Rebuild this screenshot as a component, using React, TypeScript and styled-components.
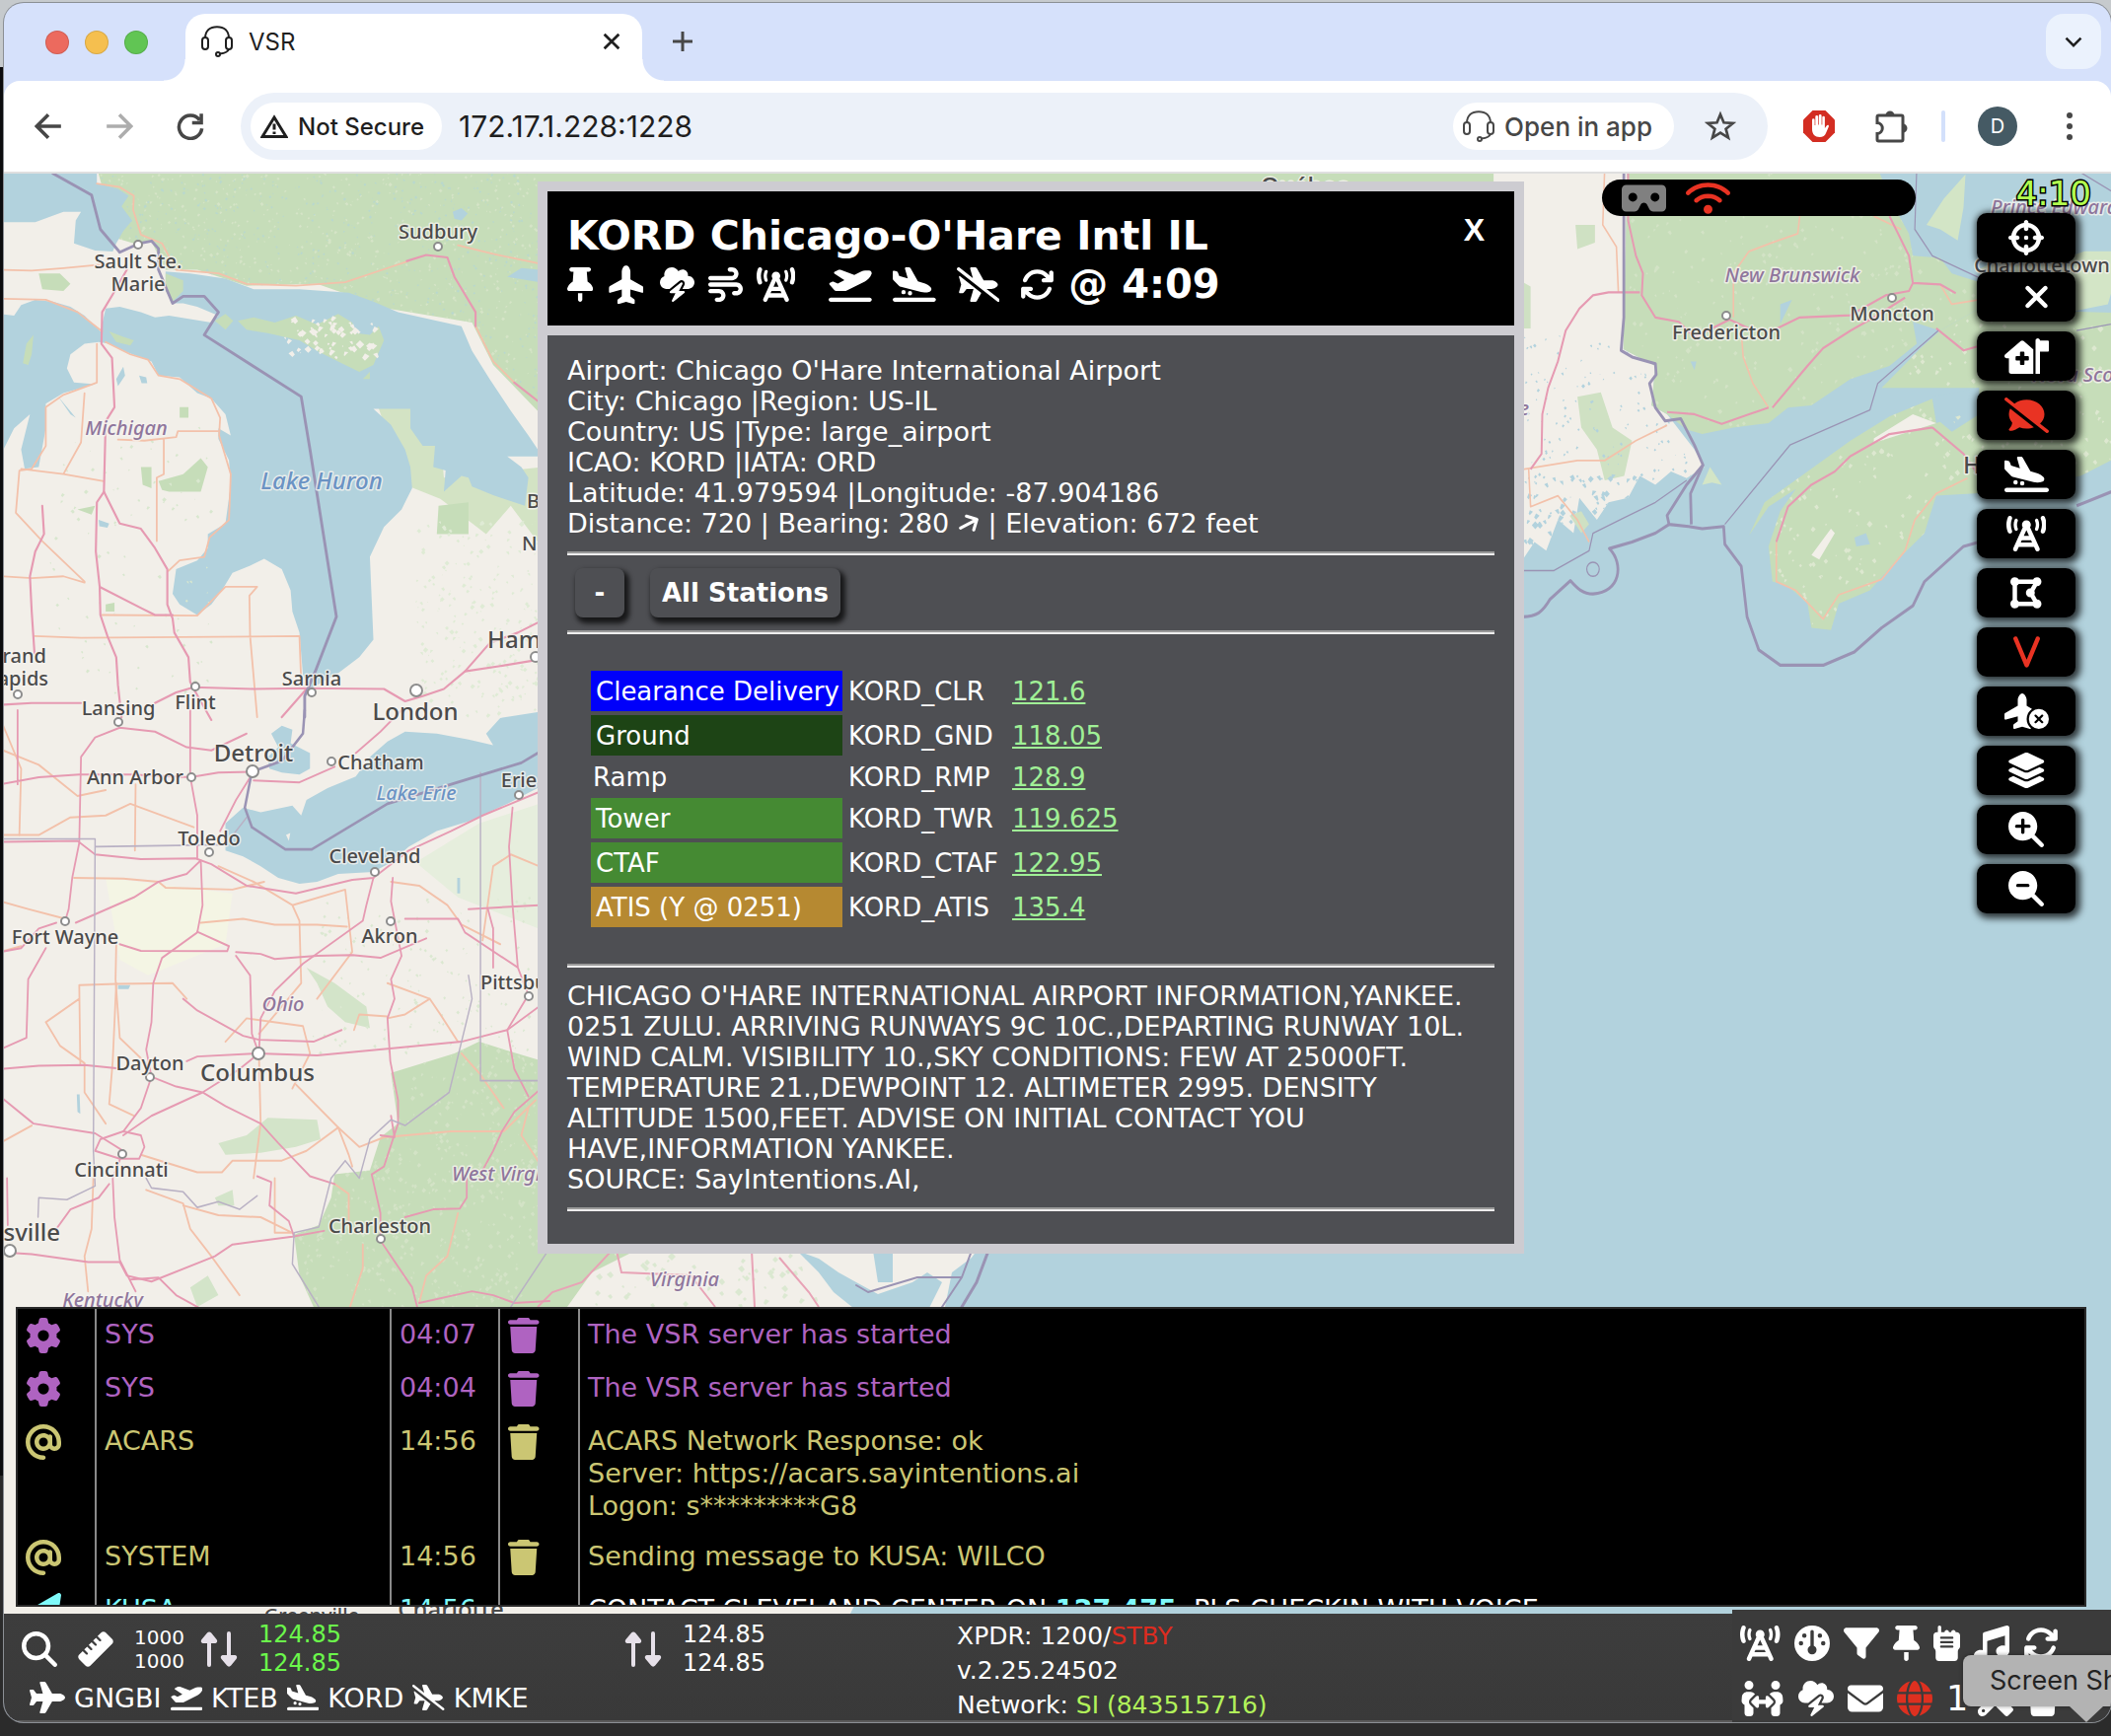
import React from "react";
import styled, { createGlobalStyle, css } from "styled-components";
import {
  FaArrowRight,
  FaArrowsRotate,
  FaAt,
  FaCloudBolt,
  FaCommentSlash,
  FaCrosshairs,
  FaDrawPolygon,
  FaEnvelope,
  FaFilter,
  FaGauge,
  FaGear,
  FaGlobe,
  FaHouseMedicalFlag,
  FaLayerGroup,
  FaMagnifyingGlass,
  FaMagnifyingGlassMinus,
  FaMagnifyingGlassPlus,
  FaMusic,
  FaPaperPlane,
  FaPeopleArrows,
  FaPlane,
  FaPlaneArrival,
  FaPlaneCircleXmark,
  FaPlaneDeparture,
  FaPlaneSlash,
  FaRuler,
  FaScrewdriverWrench,
  FaThumbtack,
  FaTowerCell,
  FaTrash,
  FaV,
  FaVrCardboard,
  FaWalkieTalkie,
  FaWifi,
  FaWind,
  FaXmark,
} from "react-icons/fa6";

const GlobalStyle = createGlobalStyle`
  *, *::before, *::after { box-sizing: border-box; }
  body { margin: 0; background: #1c1c1d; font-family: Verdana, "DejaVu Sans", sans-serif; }
  table { border-collapse: collapse; }
`;

const chromeFont = `Inter, "Liberation Sans", sans-serif`;

/* Icons share one height and keep the proportions of their own view box. */
const iconShape = css`
  svg { display: block; width: auto; }
  svg[viewBox="0 0 320 512"] { aspect-ratio: 320 / 512; }
  svg[viewBox="0 0 384 512"] { aspect-ratio: 384 / 512; }
  svg[viewBox="0 0 448 512"] { aspect-ratio: 448 / 512; }
  svg[viewBox="0 0 576 512"] { aspect-ratio: 576 / 512; }
  svg[viewBox="0 0 640 512"] { aspect-ratio: 640 / 512; }
`;

/* ---------- desktop and window ---------- */

const Desktop = styled.div`
  min-height: 100vh;
  display: flex;
  overflow: hidden;
  padding: 3px 0 14px 4px;
  background: linear-gradient(#c6cacd 68px, #0c0c0e 68px, #0c0c0e 85%, #2b2b2b 85%);
`;

const Window = styled.div`
  flex: 1;
  min-width: 0;
  display: flex;
  flex-direction: column;
  border-radius: 20px;
  overflow: hidden;
  background: #d6e1fb;
  box-shadow: 0 0 0 1px #8b8f94;
`;

const IconButton = styled.button<{ $h?: number; $color?: string; $up?: boolean }>`
  display: flex;
  flex-shrink: 0;
  align-items: center;
  justify-content: center;
  padding: 0;
  border: 0;
  background: none;
  color: ${(p) => p.$color || "#fff"};
  font: inherit;
  cursor: pointer;
  ${iconShape}
  svg {
    height: ${(p) => p.$h || 36}px;
    ${(p) => p.$up && css`transform: rotate(-90deg);`}
  }
`;

const TabStrip = styled.div`
  display: flex;
  height: 79px;
  padding: 11px 10px 0 42px;
  font-family: ${chromeFont};
`;

const Lights = styled.div`
  display: flex;
  gap: 16px;
  padding-top: 17px;
  width: 142px;
`;

const Light = styled.span<{ $c: string }>`
  width: 24px;
  height: 24px;
  border-radius: 50%;
  background: ${(p) => p.$c};
  box-shadow: inset 0 0 0 1px rgba(0, 0, 0, 0.12);
`;

const Tab = styled.div`
  position: relative;
  display: flex;
  align-items: center;
  gap: 16px;
  width: 463px;
  padding: 0 20px 12px 16px;
  border-radius: 20px 20px 0 0;
  background: #fff;
  color: #1f1f1f;
  font-size: 24px;
  &::before, &::after {
    content: "";
    position: absolute;
    bottom: 0;
    width: 22px;
    height: 22px;
  }
  &::before { right: 100%; background: radial-gradient(circle at 0 0, transparent 21px, #fff 22px); }
  &::after { left: 100%; background: radial-gradient(circle at 100% 0, transparent 21px, #fff 22px); }
`;

const TabTitle = styled.span`flex: 1;`;

const NewTab = styled(IconButton)`
  margin: 0 auto 12px 29px;
`;

const TabMenu = styled(IconButton)`
  width: 56px;
  height: 56px;
  border-radius: 18px;
  background: #ebf2fd;
`;

const Toolbar = styled.div`
  display: flex;
  align-items: center;
  height: 94px;
  padding: 0 28px 0 31px;
  border-radius: 16px 16px 0 0;
  border-bottom: 2px solid #dfdfdf;
  background: #fff;
  font-family: ${chromeFont};
`;

const NavButtons = styled.div`
  display: flex;
  gap: 44px;
  width: 209px;
`;

const Omnibox = styled.div`
  flex: 1;
  display: flex;
  align-items: center;
  height: 68px;
  padding: 0 32px 0 10px;
  border-radius: 34px;
  background: #ecf1f9;
`;

const Chip = styled.button`
  display: inline-flex;
  align-items: center;
  gap: 10px;
  height: 48px;
  padding: 0 18px 0 10px;
  border: 0;
  border-radius: 24px;
  background: #fff;
  color: #1f1f1f;
  font: 500 24px ${chromeFont};
  white-space: nowrap;
`;

const AppChip = styled(Chip)`
  margin-right: 31px;
  padding-right: 22px;
  color: #474747;
  font-size: 26px;
`;

const Url = styled.input`
  flex: 1;
  min-width: 0;
  margin-left: 17px;
  padding: 0;
  border: 0;
  outline: 0;
  background: none;
  color: #1f1f1f;
  font: 30px ${chromeFont};
`;

const Extensions = styled.div`
  display: flex;
  align-items: center;
  gap: 39px;
  margin-left: 36px;
`;

const Divider = styled.span`
  width: 4px;
  height: 32px;
  margin: 0 -6px;
  border-radius: 2px;
  background: #d3e0fb;
`;

const Avatar = styled.button`
  width: 40px;
  height: 40px;
  padding: 0;
  border: 0;
  border-radius: 50%;
  background: #455a64;
  color: #fff;
  font: 20px ${chromeFont};
`;

/* ---------- map stage ---------- */

const Stage = styled.main`
  position: relative;
  flex: 1;
  overflow: hidden;
  background: #b2d2dd;
`;

const MapArt = styled.svg`
  position: absolute;
  inset: 0;
  width: 100%;
  height: 100%;
`;

const StatusPill = styled.div`
  position: absolute;
  top: 6px;
  right: 198px;
  display: flex;
  align-items: center;
  gap: 20px;
  width: 318px;
  height: 37px;
  padding-left: 20px;
  border-radius: 19px;
  background: #000;
`;

const Clock = styled.div`
  position: absolute;
  top: 0;
  right: 20px;
  color: #b2ff4f;
  font-size: 34px;
  line-height: 40px;
  -webkit-text-stroke: 3px #000;
  paint-order: stroke fill;
`;

const ToolStack = styled.nav`
  position: absolute;
  top: 40px;
  right: 36px;
  display: flex;
  flex-direction: column;
  gap: 10px;
`;

const ToolButton = styled(IconButton)<{ $shift?: boolean }>`
  width: 100px;
  height: 50px;
  padding-left: ${(p) => (p.$shift ? 20 : 0)}px;
  border-radius: 10px;
  background: #000;
  box-shadow: 2px 2px 7px 3px rgba(0, 0, 0, 0.75);
`;

/* ---------- airport dialog ---------- */

const Dialog = styled.section`
  position: absolute;
  top: 8px;
  left: 541px;
  display: flex;
  flex-direction: column;
  gap: 10px;
  width: 1000px;
  padding: 10px;
  background: #cdccd1;
  color: #fff;
`;

const DialogHead = styled.header`
  position: relative;
  height: 136px;
  padding: 20px;
  background: #000;
`;

const DialogTitle = styled.h2`
  margin: 0;
  font-size: 41px;
  line-height: 50px;
`;

const CloseButton = styled.button`
  position: absolute;
  top: 20px;
  right: 30px;
  padding: 0;
  border: 0;
  background: none;
  color: #fff;
  font: bold 32px/38px "Liberation Sans", Arial, sans-serif;
`;

const HeadTools = styled.div`
  display: flex;
  align-items: center;
  gap: 34px;
  height: 48px;
`;

const IconGroup = styled.div<{ $gap: number }>`
  display: flex;
  align-items: center;
  gap: ${(p) => p.$gap}px;
`;

const Updated = styled.strong`
  font-size: 40px;
  line-height: 46px;
  white-space: nowrap;
`;

const DialogBody = styled.div`
  padding: 20px;
  background: #4e4f53;
  font-size: 26px;
  line-height: 31px;
`;

const Rule = styled.hr`
  height: 4px;
  margin: 13px 0;
  border: 0;
  border-top: 2px solid #9a9a9a;
  border-bottom: 2px solid #eeeeee;
`;

const Lines = styled.div`
  font-size: 27px;
  white-space: pre-line;
  svg { width: 22px; height: 26px; vertical-align: -4px; transform: rotate(-28deg); }
`;

const StationBar = styled.div`
  display: flex;
  gap: 26px;
  padding: 0 8px;
`;

const StationButton = styled.button`
  min-width: 50px;
  height: 50px;
  padding: 0 12px;
  border: 0;
  border-radius: 8px;
  background: #4e4f53;
  box-shadow: 3px 4px 5px 2px rgba(0, 0, 0, 0.7);
  color: #fff;
  font: bold 26px Verdana, "DejaVu Sans", sans-serif;
`;

const Stations = styled.table`
  margin: 33px 0 33px 20px;
  border-collapse: separate;
  border-spacing: 4px;
  td { padding: 3px 2px 1px; white-space: nowrap; }
  td:nth-child(1) { width: 255px; }
  td:nth-child(2) { width: 162px; }
`;

const RoleCell = styled.td<{ $bg?: string }>`
  background: ${(p) => p.$bg || "none"};
  && { ${(p) => p.$bg && css`padding: 6px 3px 4px 5px;`} }
`;

const Frequency = styled.a`
  color: #a0f096;
  text-decoration: underline;
`;

/* ---------- message log ---------- */

const LogPanel = styled.div`
  position: absolute;
  left: 12px;
  right: 25px;
  bottom: 7px;
  height: 304px;
  overflow: hidden;
  border: 2px solid #2a2a2a;
  background: #000;
`;

const LogTable = styled.table`
  width: 100%;
  font-size: 27px;
  line-height: 33px;
  td { padding: 9px 8px; vertical-align: top; white-space: pre-line; }
  td + td { border-left: 2px solid #8a8a8a; }
  td:nth-child(1) { width: 79px; }
  td:nth-child(2) { width: 299px; }
  td:nth-child(3) { width: 110px; }
  td:nth-child(4) { width: 81px; }
`;

const LogRow = styled.tr<{ $c: string }>`
  color: ${(p) => p.$c};
  ${iconShape}
  svg { height: 36px; }
`;

const White = styled.span`
  color: #fff;
  strong { color: #7ffafa; }
`;

/* ---------- radio bar ---------- */

const RadioBar = styled.footer`
  position: relative;
  display: grid;
  grid-template-columns: 611fr 337fr 786fr 384px;
  height: 110px;
  padding-left: 18px;
  border-bottom: 2px solid #5a5a5a;
  background: linear-gradient(#3d3d3d, #393939);
  color: #fff;
  font-size: 25px;
`;

const RadioRow = styled.div`
  display: flex;
  align-items: center;
  gap: 21px;
  height: 62px;
  padding-top: 10px;
`;

const Pair = styled.div<{ $c?: string; $small?: boolean }>`
  width: ${(p) => (p.$small ? 46 : 90)}px;
  color: ${(p) => p.$c || "#fff"};
  font-size: ${(p) => (p.$small ? 20 : 24)}px;
  line-height: ${(p) => (p.$small ? 24 : 29)}px;
`;

const Route = styled.div`
  display: flex;
  align-items: center;
  gap: 9px;
  height: 48px;
  padding: 0 0 2px 8px;
  font-size: 27px;
`;

const Transponder = styled.div`
  padding-top: 5px;
  line-height: 35px;
`;

const Tint = styled.span<{ $c: string }>`color: ${(p) => p.$c};`;

const Apps = styled.div`
  display: grid;
  grid-template-rows: 56px 56px;
  margin-top: -4px;
  padding: 6px 8px 0;
  background: #3b3b3b;
`;

const AppRow = styled.div`
  display: flex;
  align-items: center;
  gap: 14px;
  font-size: 35px;
`;

const Count = styled.span`width: 18px;`;

const Tooltip = styled.div`
  position: absolute;
  top: 42px;
  left: calc(100% - 150px);
  height: 52px;
  padding: 0 27px;
  border-radius: 8px;
  background: #b3b3b3;
  box-shadow: 0 0 4px rgba(0, 0, 0, 0.4);
  color: #232323;
  font: 27px/52px ${chromeFont};
  white-space: nowrap;
  &::after {
    content: "";
    position: absolute;
    top: 100%;
    left: 108px;
    border: solid transparent;
    border-width: 16px 17px 0;
    border-top-color: #b3b3b3;
  }
`;

/* ---------- small drawings ---------- */

const Headset = () => (
  <svg viewBox="0 0 32 32" width="32" height="32" fill="none" stroke="currentColor" strokeWidth="2">
    <path d="M4 13C4 5 9 1.200 16 1.200S28 5 28 13" />
    <rect x="1" y="12" width="6" height="12" rx="3" />
    <rect x="25" y="12" width="6" height="12" rx="3" />
    <path d="M28 24c-1 3-5 4-9 4.500" />
    <circle cx="17" cy="29" r="2" />
  </svg>
);

const Stroke = ({ d, s = 24, w = 3 }: { d: string; s?: number; w?: number }) => (
  <svg viewBox={`0 0 ${s} ${s}`} fill="none" stroke="currentColor" strokeWidth={w}>
    <path d={d} />
  </svg>
);

const StopHand = () => (
  <svg viewBox="0 0 32 32">
    <path d="M9.500 0h13L32 9.500v13L22.500 32h-13L0 22.500v-13z" fill="#d32d22" />
    <path
      d="M9 17V9.500a1.300 1.300 0 0 1 2.600 0V15h.7V6.500a1.400 1.400 0 0 1 2.800 0V14.500h.7V5.400a1.400 1.400 0 0 1 2.800 0V14.500h.7V7a1.300 1.300 0 0 1 2.600 0v11l1.800-2.600c1-1.400 2.800-.6 2.100 1L23 23c-1 2.600-3 4-6.400 4C12 27 9 24 9 19z"
      fill="#fff"
    />
  </svg>
);

const Swap = () => (
  <svg viewBox="0 0 38 36" fill="#e6e0e9">
    <path d="M7 12H3.500C1 12 0 10 1.500 8L7 1.500c1.200-1.500 3-1.500 4.200 0L16.500 8c1.500 2 .5 4-2 4H11v22a2 2 0 0 1-4 0z" />
    <path d="M27 24h-3.500c-2.500 0-3.500 2-2 4l5.500 6.500c1.200 1.500 3 1.500 4.200 0l5.300-6.500c1.500-2 .5-4-2-4H31V2a2 2 0 0 0-4 0z" />
  </svg>
);

/* ---------- map drawing ---------- */

const random = (seed: number) => () => {
  seed = (seed * 16807) % 2147483647;
  return seed / 2147483647;
};

const Specks = ({ n, box, seed, fill, size = 6, clip }: {
  n: number; box: number[]; seed: number; fill: string; size?: number; clip?: string;
}) => {
  const r = random(seed * 7919);
  const d = Array.from({ length: n }, () => {
    const x = Math.round(box[0] + r() * (box[2] - box[0]));
    const y = Math.round(box[1] + r() * (box[3] - box[1]));
    const a = 1 + Math.round(r() * size);
    const b = 1 + Math.round(r() * size);
    return `M${x} ${y}l${a} -${b} ${b} ${a} -${b} ${b}z`;
  }).join("");
  return <path d={d} fill={fill} clipPath={clip && `url(#${clip})`} />;
};

const shield =
  "M275 0L1600 0 1600 720 1526 690 1400 560 1340 440 1100 400 900 330 700 335 560 290 470 290 430 210 380 215 330 200z";
const westVirginia =
  "M1110 930L1290 880 1360 850 1430 870 1540 900 1560 1560 905 1560 850 1450 835 1345 905 1320 940 1250 950 1190 1050 1180 1080 1095 1130 1060z";
const brunswick =
  "M328 0L970 0 1000 70 1050 150 1060 200 1130 205 1160 240 1230 260 1230 320 1130 370 1060 350 1070 400 1000 450 900 480 800 540 740 545 690 580 600 590 520 605 480 595 430 560 390 540 400 450 318 412z";
const novaScotia =
  "M980 500L1080 410 1130 370 1230 320 1600 330 1600 650 1490 700 1220 740 1120 745 1100 800 1090 830 1010 900 950 960 870 990 850 1050 800 1045 790 990 740 950 700 940 690 860 720 780 760 730 690 770 640 835 680 760 790 690 900 620 1000 565 1110 525 1120 580 1190 560 1230 500 1120 500z";
const maine =
  "M0 0L328 0 318 412 400 450 390 540 430 560 500 640 525 680 480 705 440 690 400 720 360 700 330 750 280 760 250 800 205 750 190 830 150 800 120 870 90 850 60 890 0 880z";

const leftHighways = [
  "M360 290L320 360 290 410 288 500 318 540 325 680 300 720 295 920 275 950 272 1090 283 1190 285 1270 305 1330 330 1390 335 1470 345 1560",
  "M295 920L340 1010 400 1025 440 1080 475 1140 475 1240 490 1280 495 1320 535 1390 540 1460 550 1480",
  "M283 1190L400 1250 440 1270 490 1270",
  "M120 960L125 1040 100 1090 85 1160 90 1260 98 1380",
  "M0 1525L90 1520 230 1520M440 1520L500 1490 550 1475 720 1480 870 1478 1090 1480 1150 1515 1200 1500 1260 1480 1320 1430 1420 1415 1540 1395",
  "M870 1480L800 1560M550 1480L600 1568M1320 1430L1390 1350 1470 1320 1530 1290",
  "M1155 265L1210 248 1270 255 1290 310 1350 410 1350 450M1460 610L1530 665",
];
const leftMinor = [
  "M275 45L340 55 380 80 378 120 400 190 460 215 500 290 620 300 700 330 840 335 980 325 1100 285 1160 265",
  "M1300 220L1400 245 1530 272M1350 450L1400 550 1460 610",
  "M0 290L90 292 180 285 290 275M0 372L130 375 220 410 290 465",
  "M300 495L370 530 420 545 450 590 510 600 600 655 625 710 622 760 655 870 650 1000 595 1050 580 1105 510 1115 478 1145",
  "M275 500L275 610 180 645 130 680 130 790 90 855 55 860 45 980 120 1060 240 1175",
  "M60 855L180 870 295 890M180 870L230 780 240 640M335 772L410 775 500 765 505 748 620 748M465 770L465 870 445 880 445 1060",
  "M0 1160L90 1165 180 1160 240 1178M98 1330L230 1335 850 1330 855 1460M290 1270L560 1272 640 1190 730 1190 708 1215 710 1330 730 1560",
];
const southHighways = [
  "M50 0L50 190 M0 190L110 172 225 165 370 165 540 172 620 160 715 158",
  "M340 45L270 70 230 120 225 340 205 430 195 510 185 540M340 45L440 55 530 95 600 103 700 60",
  "M0 338L220 335 270 370 400 382 555 380 600 395 700 450 840 470 1000 435 1060 430 1160 360 1280 310 1370 270 1530 210",
  "M540 0L540 170 560 270 560 380 M715 165L670 230 625 310M720 180L850 185 950 145M1010 110L1080 55 1140 0",
  "M0 620L60 610 110 560 160 545M215 545L380 480 450 440 530 420 570 385 575 500 560 570 460 635 435 700 430 800 415 870 430 940 400 1020 350 1080",
  "M130 610L80 690 75 840 0 870M340 600L400 617 645 618 650 605 560 568M670 620L740 625 780 638 900 630 1000 628 1080 635 1210 585",
  "M1060 430L1040 500 1030 540 860 650 780 720 740 790 735 880",
  "M670 630L710 680 715 830 735 880M520 740L560 770 690 835 735 845 890 850 970 820",
  "M0 920L110 912 240 910 330 918M530 900L560 888 730 880 900 885 1100 868 1310 850 1440 820 1530 760",
  "M1115 430L1110 490 1140 630 1110 690 1120 740 1100 790 1108 900 1130 1000 1130 1060 1090 1170 1055 1190 1080 1290 1080 1360 1170 1480 1190 1550",
  "M735 880L680 920 575 980 430 1040 350 1090M430 940L500 965 575 980 640 1015 740 1060 790 1110 880 1195 950 1215",
  "M0 990L95 1060 270 1085 350 1130 320 1200 325 1300 340 1410 385 1490",
  "M310 1215L280 1250 200 1280 160 1330M0 1390L90 1395 250 1415 340 1415 360 1450 430 1465 610 1400 660 1370 830 1350 920 1335",
  "M730 1195L770 1210 765 1270 820 1310 835 1350M1150 1300L1230 1280 1305 1278 1325 1250 1325 1200M1370 1180L1400 1130 1425 1080 1460 1030 1530 975",
  "M1455 250L1445 350 1455 500 1470 660 1500 730M1330 510L1530 500M1150 535L1300 535 1320 570 1470 660",
  "M1385 510L1400 560 1400 660M1500 730L1440 820 1460 920 1500 990M1080 1090L1120 1095 1110 1040M1190 1520L1340 1490 1400 1500 1460 1520 1560 1515",
  "M270 1130L285 1100 350 1080 400 1090 410 1120 395 1150 340 1150zM370 1460L450 1455 500 1500 580 1540M20 1200L22 1320",
];
const southMinor = [
  "M0 100L110 140 220 220 300 205M0 320L110 320 200 275 300 270 370 240 400 250 550 300M385 190L383 360",
  "M210 430L350 432 450 440 470 455 660 460 750 440M570 545L690 535 780 550 900 550 985 555",
  "M0 490L80 510 185 535M330 600L328 690 340 840 420 910M0 620L60 605",
  "M228 910L225 705 330 702 490 700 530 740M225 740L130 800 170 860 240 905 240 980 300 1060",
  "M330 700L320 900 310 1010 380 1040M620 400L720 440 830 500 850 540 855 700 735 830M830 500L980 460 1000 620 900 740",
  "M1110 440L1190 450 1270 500 1310 550 1420 600M735 880L740 1060 720 1200M640 850L700 790 860 810 880 880 830 970",
  "M400 1140L560 1185 630 1185 660 1155 800 1155 870 1130 960 1070 1020 1120 1090 1095 1280 1080 1430 1080 1520 1000",
  "M840 960L960 1070 990 1140 1000 1170M265 1200L260 1330 240 1400 250 1490M415 1230L520 1265 540 1330 600 1400 680 1500",
  "M520 1270L620 1295 740 1300 830 1340 780 1340 780 1200M0 1110L90 1065M950 1215L990 1240 990 1320M1310 880L1360 930 1430 1020",
  "M1220 740L1150 780 1100 790M1100 700L1220 740 1250 780 1300 850M1370 590L1400 400 1450 370 1530 400M1500 1020L1480 1090 1530 1160",
  "M1300 1290L1270 1400 1210 1450 1190 1520M1030 1370L1030 1430 990 1540M1005 820L1020 780 1100 785M0 20L60 150 55 320",
];
const eastHighways = [
  "M360 283L280 283 240 290 205 320 170 370 150 440 125 500 110 560 108 650 80 685M330 0L330 120 350 200 368 240 365 290 400 340 460 350 500 385 590 345 640 365",
  "M700 370L770 340 900 335 990 290 1050 280 1060 262 1130 265 1170 285M1060 262L1050 200 1000 110M1040 295L960 340 900 370 830 410 790 450 700 545",
  "M690 545L640 560 570 582 500 560 430 555M1120 365L1190 415 1230 405M1110 590L1190 650 1230 700M1110 590L1000 605 900 655 860 690 800 720 740 770 710 850",
];
const eastMinor = [
  "M270 0L265 130 300 180 305 283M60 685L200 665 270 665 350 620 430 585M75 685L80 770 150 745 200 800 230 850M770 110L765 150 700 170 640 190 600 240 600 340",
  "M620 370L625 430 650 490 690 545M710 850L710 940 760 960 830 1025 870 970 980 935 1040 870 1065 800 1120 740 1200 705M960 110L1030 140M1130 265L1160 310 1230 300",
];

const cityDots = [
  [140, 248, 4], [444, 250, 4], [18, 704, 4], [198, 696, 4], [316, 702, 4], [422, 700, 6], [120, 732, 4],
  [256, 782, 6], [336, 772, 4], [194, 788, 4], [526, 806, 4], [212, 864, 4], [380, 884, 4], [66, 934, 4],
  [396, 934, 4], [536, 1010, 4], [152, 1092, 4], [262, 1068, 6], [124, 1170, 4], [386, 1256, 4], [10, 1268, 6],
  [543, 666, 5], [1750, 320, 4], [1918, 302, 4],
];

/* name, x, baseline, size, anchor */
type Label = [string, number, number, number, ("start" | "end")?];
const cities: Label[] = [
  ["Sudbury", 444, 242, 20], ["Sault Ste.", 140, 272, 20], ["Marie", 140, 295, 20], ["Grand", 47, 672, 20, "end"],
  ["Rapids", 49, 695, 20, "end"], ["Lansing", 120, 725, 20], ["Flint", 198, 719, 20], ["Sarnia", 316, 695, 20],
  ["London", 421, 730, 24], ["Ham", 494, 657, 24, "start"], ["B", 534, 515, 20, "start"], ["N", 529, 558, 20, "start"],
  ["Detroit", 257, 772, 24], ["Chatham", 386, 780, 20], ["Ann Arbor", 137, 795, 20], ["Erie", 526, 798, 20],
  ["Toledo", 212, 857, 20], ["Cleveland", 380, 875, 20], ["Fort Wayne", 66, 957, 20], ["Akron", 395, 956, 20],
  ["Pittsbu", 487, 1003, 20, "start"], ["Dayton", 152, 1085, 20], ["Columbus", 261, 1096, 24],
  ["Cincinnati", 123, 1193, 20], ["sville", 61, 1258, 24, "end"], ["Charleston", 385, 1250, 20],
  ["Greenville", 316, 1645, 20], ["Charlotte", 457, 1640, 24], ["Québec", 1322, 197, 24],
  ["Fredericton", 1750, 344, 20], ["Moncton", 1918, 325, 20], ["Charlottetown", 2070, 276, 20], ["H", 1990, 480, 24, "start"],
];
const regions: Label[] = [
  ["Michigan", 128, 441, 20], ["Ohio", 287, 1025, 20], ["West Virgi", 458, 1197, 20, "start"], ["Kentucky", 104, 1325, 20],
  ["Virginia", 694, 1304, 20], ["New Brunswick", 1817, 286, 20], ["Prince Edward", 2018, 217, 20, "start"],
  ["Nova Scotia", 2060, 387, 20, "start"], ["e", 1550, 421, 20, "end"],
];
const lakes: Label[] = [["Lake Huron", 326, 496, 24], ["Lake Erie", 422, 811, 20]];

const Labels = ({ items, fill, italic }: { items: Label[]; fill: string; italic?: boolean }) => (
  <g
    fill={fill}
    stroke="#f6f4f0"
    strokeOpacity="0.8"
    strokeWidth="3"
    strokeLinejoin="round"
    style={{ paintOrder: "stroke" }}
    fontFamily='"Noto Sans", sans-serif'
    fontStyle={italic ? "italic" : "normal"}
    fontWeight={500}
  >
    {items.map(([t, x, y, s, a]) => (
      <text key={t} x={x} y={y} fontSize={s} textAnchor={a || "middle"}>{t}</text>
    ))}
  </g>
);

const WATER = "#b2d2dd";
const LAND = "#f2efe9";
const GREEN = "#c6ddb9";

const MapDrawing = () => (
  <MapArt viewBox="4 176 2136 1460" preserveAspectRatio="xMinYMin slice" role="img" aria-label="Map">
    <defs>
      <clipPath id="shield"><path d={shield} /></clipPath>
      <clipPath id="wv"><path d={westVirginia} /></clipPath>
      <clipPath id="nb"><path d={brunswick} /></clipPath>
      <clipPath id="ns"><path d={novaScotia} /></clipPath>
      <clipPath id="me"><path d={maine} /></clipPath>
    </defs>
    <rect x="0" y="170" width="2140" height="1470" fill={WATER} />
    <path d="M0 170H1530V1240L1010 1240 985 1275 965 1290 958 1325 920 1450 900 1560 860 1640H0z" fill={LAND} />
    <g transform="translate(0 170) scale(0.3571)" strokeLinejoin="round">
      <path d={shield} fill={GREEN} />
      <path d="M1526 0L4240 0 4240 60 1500 60z" fill={GREEN} />
      <Specks n={900} box={[280, 0, 1540, 700]} seed={11} fill="#b9d8cd" size={4} clip="shield" />
      <Specks n={900} box={[280, 0, 1540, 700]} seed={23} fill="#d5e4c7" size={5} clip="shield" />
      <path d="M1060 640L1240 640 1260 880 1540 850 1540 1080 1450 960 1380 1040 1250 940 1150 900z" fill="#d3e3c4" />
      <path d="M0 0L275 0 275 45 335 60 365 80 345 110 375 150 350 180 330 215 320 238 270 235 210 215 215 150 230 125 180 125 100 155 0 155z" fill={WATER} />
      <path
        d="M0 415L40 420 60 390 100 375 150 380 200 395 240 420 285 465 300 400 340 395 400 410 440 425 480 420 600 440 620 420 560 395 520 385 490 385 470 340 470 295 540 300 640 315 720 345 850 345 990 355 1060 380 1130 410 1240 435 1310 450 1340 520 1390 600 1450 690 1500 760 1540 820 1440 820 1480 850 1500 880 1490 960 1400 930 1340 905 1330 880 1310 875 1260 920 1265 860 1230 850 1235 790 1200 790 1165 740 1165 685 1060 685 1110 730 1150 800 1165 850 1170 910 1140 970 1090 1020 1050 1105 1060 1340 1020 1390 960 1435 880 1480 860 1440 850 1320 830 1260 825 1200 800 1140 750 1110 710 1130 660 1150 630 1200 600 1240 560 1270 510 1240 490 1210 500 1140 560 1115 590 1080 590 1040 640 1010 655 900 650 830 620 770 620 740 655 760 640 700 600 655 560 640 510 595 450 590 430 550 350 520 310 500 280 495 240 500 200 530 190 570 210 610 270 615 180 640 130 670 130 740 110 850 70 855 60 800 85 700 40 740 10 800 0 800z"
        fill={WATER}
      />
      <path d="M675 435L720 425 780 440 840 420 900 445 960 415 1000 440 1010 470 1050 475 1075 450 1090 490 1060 560 1020 580 960 550 900 520 850 490 760 470 700 460zM470 300L520 320 520 350 490 380 470 350zM610 435L640 415 662 435 640 460zM310 465L350 480 380 490 370 505 330 495zM65 555L75 500 95 475 90 530 80 560zM1030 600L1050 580 1050 600z" fill={GREEN} />
      <Specks n={60} box={[800, 430, 1060, 540]} seed={5} fill={LAND} size={12} />
      <path d="M110 300L170 300 200 330 180 350 120 345zM400 850L430 850 430 910 405 900zM450 890L520 870 570 825 590 850 570 920 480 920 460 915zM510 680L535 680 535 710 510 710zM1245 960L1330 950 1330 1040 1240 1040zM300 1240L325 1235 325 1260 300 1260zM220 970L270 960 260 985z" fill={GREEN} />
      <path d="M330 600L350 565 355 590 335 620zM395 590L415 595 418 612 402 612zM280 1000L310 1010 305 1022 282 1018zM165 650L215 710 200 700zM1285 125L1310 115 1328 130 1310 150 1290 145zM1440 310L1480 285 1530 290 1530 325z" fill={WATER} />
      <Specks n={90} box={[140, 720, 600, 1500]} seed={71} fill="#d8e7ce" size={6} />
      <Specks n={220} box={[1180, 1000, 1530, 1560]} seed={72} fill="#dfebd5" size={7} />
    </g>
    <g transform="translate(0 720) scale(0.3571 0.3954)">
      <path d="M1180 390L1360 290 1530 240 1530 560 1300 480z" fill="#e6eedd" />
      <path d="M300 430L660 470 640 600 420 680 340 640z" fill="#f4f5e4" />
      <path d={westVirginia} fill={GREEN} />
      <Specks n={700} box={[840, 850, 1560, 1560]} seed={31} fill="#d3e3c6" size={7} clip="wv" />
      <path d="M620 1110L700 1090 760 1045 900 1050 910 1100 840 1120 740 1135 640 1140zM870 660L950 700 1040 760 1050 815 980 800 930 760 900 700zM610 1250L660 1230 665 1270 620 1270zM540 1480L590 1450 620 1500 560 1530z" fill="#d3e4c9" />
      <path d="M770 60L800 40 830 50 825 85 880 110 880 150 850 165 800 160 765 150 760 120 790 95z" fill={WATER} />
      <path d="M640 290L690 250 740 262 830 245 855 270 870 230 930 200 1010 170 1050 120 1100 80 1150 55 1240 60 1330 75 1400 90 1380 60 1420 20 1526 5 1600 0 1600 170 1526 200 1440 240 1330 285 1240 310 1160 350 1110 390 1060 415 960 420 900 440 850 445 790 430 740 400 690 375 640 360z" fill={WATER} />
      <path d="M335 705L370 705 365 715 335 715zM1298 430L1306 430 1306 470 1298 470zM218 985L226 985 228 1035 220 1030z" fill={WATER} />
      <path d="M812 320L824 315 820 335z" fill={LAND} />
      <Specks n={140} box={[880, 480, 1500, 880]} seed={91} fill="#dbe8d1" size={5} />
    </g>
    <path d="M545 1270H640L600 1290 575 1325H530V1260z" fill={GREEN} />
    <Specks n={60} box={[600, 1272, 830, 1325]} seed={43} fill="#dbe8d1" size={3} />
    <path d="M808 1268L830 1276 850 1290 868 1300 890 1312 925 1300 940 1290 955 1300 940 1330 870 1330 845 1310 830 1290zM885 1268L905 1268 905 1300 890 1300z" fill={WATER} />
    <path d="M545 1325L560 1310 590 1300 620 1268M625 1268L630 1290 700 1293 725 1325M762 1268L765 1325M790 1275L820 1310 830 1325" fill="none" stroke="#e8a3b6" strokeWidth="2" />

    <g fill="none" strokeLinejoin="round" strokeLinecap="round">
      <g transform="translate(0 170) scale(0.3571)">
        <g stroke="#f3c1aa" strokeWidth="5">{leftMinor.map((d) => <path key={d} d={d} />)}</g>
        <g stroke="#e69ab2" strokeWidth="6">{leftHighways.map((d) => <path key={d} d={d} />)}</g>
        <path
          d="M150 16L260 78 285 175 340 240 395 215 430 208 450 230 450 290 475 350 490 385 520 365 580 365 620 410 580 475 855 650 880 800 955 1275 895 1430 865 1500 865 1560"
          stroke="#9a93b4"
          strokeWidth="8"
        />
      </g>
      <g transform="translate(0 720) scale(0.3571 0.3954)">
        <g stroke="#f3c1aa" strokeWidth="5">{southMinor.map((d) => <path key={d} d={d} />)}</g>
        <g stroke="#e69ab2" strokeWidth="5">{southHighways.map((d) => <path key={d} d={d} />)}</g>
        <path
          d="M0 330L270 330 265 1130 270 1220 190 1255 110 1250 108 1300M272 350L640 345 700 275M1364 160V950H1530M415 1200L430 1225 520 1235 560 1275 620 1260 680 1280 730 1245M835 1340L905 1325 940 1200 980 1155 1020 1200 1050 1100 1110 1050 1150 1065 1275 980 1340 740 1330 680M835 1340L830 1420 905 1530M1450 1530L1560 1380"
          stroke="#b9b1c4"
          strokeWidth="4"
        />
        <path d="M865 0L860 60 800 130 715 158 695 250 715 300 810 357 885 357 1100 240 1480 135 1530 108" stroke="#9a93b4" strokeWidth="7" />
      </g>
      <path d="M1002 1268L990 1300 975 1325" stroke="#9a93b4" strokeWidth="3" />
      <path d="M868 1303L880 1310 930 1295 975 1295 985 1268M955 1325L975 1295" stroke="#9a93b4" strokeWidth="2" />
    </g>

    <g transform="translate(1520 170) scale(0.3954 0.4464)">
      <path d={maine} fill={LAND} />
      <path d="M200 520L260 510 290 590 340 620 320 700 270 710 250 640 210 590zM195 130L245 130 245 170 200 185zM60 260L80 270 80 365 60 365zM180 790L210 780 230 810 210 830z" fill="#cfe1c3" />
      <Specks n={150} box={[60, 380, 500, 720]} seed={55} fill={WATER} size={4} clip="me" />
      <Specks n={120} box={[60, 700, 500, 850]} seed={56} fill={WATER} size={9} clip="me" />
      <path d={brunswick} fill={GREEN} />
      <path d={novaScotia} fill={GREEN} />
      <path d="M1095 130L1140 70 1195 15 1190 90 1175 165 1130 140zM1220 235L1300 200 1400 220 1500 190 1600 190 1560 310 1450 330 1360 300zM520 720L540 680 570 720 545 715z" fill="#d3e5c6" />
      <path d="M1110 520L1230 500 1230 560 1160 600 1120 570zM910 840L940 830 950 855 915 860zM720 310L750 300 720 355zM490 440L505 440 500 460z" fill={WATER} />
      <Specks n={300} box={[330, 0, 1230, 600]} seed={61} fill="#d3e3c6" size={6} clip="nb" />
      <Specks n={500} box={[640, 330, 1600, 1060]} seed={62} fill="#dde8d0" size={7} clip="ns" />
      <path d="M960 615L1060 560 1120 580 1050 600 960 625zM800 880L850 820 860 830 820 890z" fill={LAND} />
      <g fill="none" strokeLinejoin="round">
        <g stroke="#f3c1aa" strokeWidth="4">{eastMinor.map((d) => <path key={d} d={d} />)}</g>
        <g stroke="#e69ab2" strokeWidth="5">{eastHighways.map((d) => <path key={d} d={d} />)}</g>
        <g stroke="#9a93b4" strokeWidth="7">
          <path d="M319 0L319 340 312 415 340 430 400 445 402 470 385 490 400 545 425 575 465 570 500 630 522 675 480 720 430 790 435 810 485 815 520 820 575 815 578 855 620 905 635 1020 665 1095 720 1130 830 1130 910 1100 980 1045 1060 995 1090 940 1190 860 1230 850" />
          <path d="M522 675L490 740 492 810M435 810L400 830 340 850 282 865C320 900 310 965 240 968 210 968 195 950 182 938L130 980C110 1010 95 1020 60 1020M1480 768L1600 725" />
        </g>
        <g stroke="#9a93b4" strokeWidth="3">
          <path d="M578 810L745 630 950 550 970 490 1125 370M1070 0L1065 140 1110 200 1230 250M60 915L140 915 230 870 240 830 320 795 400 760 480 710M1470 0L1600 70M1480 370L1600 350" />
          <circle cx="240" cy="912" r="16" />
        </g>
      </g>
    </g>

    <g fill="#fff" stroke="#8d8d8d" strokeWidth="2">
      {cityDots.map(([x, y, r]) => <circle key={`${x}-${y}`} cx={x} cy={y} r={r} />)}
    </g>
    <Labels items={cities} fill="#4b4b4b" />
    <Labels items={regions} fill="#8f769c" italic />
    <Labels items={lakes} fill="#6b93c4" italic />
  </MapArt>
);

/* ---------- data ---------- */

const stations = [
  { role: "Clearance Delivery", id: "KORD_CLR", freq: "121.6", bg: "#0000fa" },
  { role: "Ground", id: "KORD_GND", freq: "118.05", bg: "#1d4415" },
  { role: "Ramp", id: "KORD_RMP", freq: "128.9" },
  { role: "Tower", id: "KORD_TWR", freq: "119.625", bg: "#458a33" },
  { role: "CTAF", id: "KORD_CTAF", freq: "122.95", bg: "#458a33" },
  { role: "ATIS (Y @ 0251)", id: "KORD_ATIS", freq: "135.4", bg: "#b68931" },
];

const purple = "#af63c1";
const khaki = "#cbc673";

const messages = [
  { c: purple, icon: <FaGear />, from: "SYS", time: "04:07", text: "The VSR server has started", removable: true },
  { c: purple, icon: <FaGear />, from: "SYS", time: "04:04", text: "The VSR server has started", removable: true },
  {
    c: khaki, icon: <FaAt />, from: "ACARS", time: "14:56", removable: true,
    text: "ACARS Network Response: ok\nServer: https://acars.sayintentions.ai\nLogon: s*********G8",
  },
  { c: khaki, icon: <FaAt />, from: "SYSTEM", time: "14:56", text: "Sending message to KUSA: WILCO", removable: true },
  {
    c: "#7ffafa", icon: <FaPaperPlane />, from: "KUSA", time: "14:56", removable: false,
    text: <White>CONTACT CLEVELAND CENTER ON <strong>127.475</strong>. PLS CHECKIN WITH VOICE</White>,
  },
];

const tools = [
  { name: "Center map", icon: <FaCrosshairs /> },
  { name: "Clear", icon: <FaXmark />, shift: true },
  { name: "Field", icon: <FaHouseMedicalFlag /> },
  { name: "Mute messages", icon: <FaCommentSlash />, color: "#e93323" },
  { name: "Arrivals", icon: <FaPlaneArrival /> },
  { name: "Stations", icon: <FaTowerCell /> },
  { name: "Boundaries", icon: <FaDrawPolygon /> },
  { name: "VATSIM", icon: <FaV />, color: "#e93323" },
  { name: "Hide aircraft", icon: <FaPlaneCircleXmark /> },
  { name: "Layers", icon: <FaLayerGroup /> },
  { name: "Zoom in", icon: <FaMagnifyingGlassPlus /> },
  { name: "Zoom out", icon: <FaMagnifyingGlassMinus /> },
];

export default function App() {
  return (
    <Desktop>
      <GlobalStyle />
      <Window>
        <TabStrip>
          <Lights>
            <Light $c="#ec6a5e" />
            <Light $c="#f5bf4f" />
            <Light $c="#61c554" />
          </Lights>
          <Tab>
            <Headset />
            <TabTitle>VSR</TabTitle>
            <IconButton $h={22} $color="#1f1f1f" aria-label="Close tab">
              <Stroke d="M4 4L20 20M20 4L4 20" w={3} />
            </IconButton>
          </Tab>
          <NewTab $h={24} $color="#474747" aria-label="New tab">
            <Stroke d="M12 2V22M2 12H22" w={3} />
          </NewTab>
          <TabMenu $h={20} $color="#1f1f1f" aria-label="Search tabs">
            <Stroke d="M3 8L12 17 21 8" w={3} />
          </TabMenu>
        </TabStrip>
        <Toolbar>
          <NavButtons>
            <IconButton $h={28} $color="#474747" aria-label="Back"><Stroke d="M23 12H2M12 2L2 12 12 22" /></IconButton>
            <IconButton $h={28} $color="#adadad" aria-label="Forward"><Stroke d="M1 12H22M12 2L22 12 12 22" /></IconButton>
            <IconButton $h={28} $color="#474747" aria-label="Reload">
              <Stroke d="M20 6.500A10 10 0 1 0 22 14M21.500 1V9H13.500" />
            </IconButton>
          </NavButtons>
          <Omnibox>
            <Chip>
              <svg viewBox="0 0 28 24" width="28" height="24" fill="none" stroke="currentColor" strokeWidth="3">
                <path d="M14 3L26 22.500H2zM14 9.500V15.500M14 17.500V20" />
              </svg>
              Not Secure
            </Chip>
            <Url aria-label="Address" defaultValue="172.17.1.228:1228" />
            <AppChip><Headset />Open in app</AppChip>
            <IconButton $h={32} $color="#474747" aria-label="Bookmark">
              <Stroke d="M12 3L14.600 9.200 21.500 9.700 16.200 14 18 20.700 12 17 6 20.700 7.800 14 2.500 9.700 9.400 9.200z" w={2} />
            </IconButton>
          </Omnibox>
          <Extensions>
            <IconButton $h={32} aria-label="Ad blocker"><StopHand /></IconButton>
            <IconButton $h={36} $color="#474747" aria-label="Extensions">
              <svg viewBox="0 0 36 36">
                <path d="M4 8.500A1.500 1.500 0 0 1 5.500 7H28.500A1.500 1.500 0 0 1 30 8.500V31.500A1.500 1.500 0 0 1 28.500 33H5.500A1.500 1.500 0 0 1 4 31.500V25.500C11 25 11 15 4 14.500z" fill="none" stroke="currentColor" strokeWidth="3" />
                <path d="M12.500 7a4.500 4.500 0 0 1 9 0zM30 15.500a4.500 4.500 0 0 1 0 9z" fill="currentColor" />
              </svg>
            </IconButton>
            <Divider />
            <Avatar>D</Avatar>
            <IconButton $h={28} $color="#474747" aria-label="Browser menu">
              <svg viewBox="0 0 28 28" fill="currentColor">
                <circle cx="14" cy="3" r="3" /><circle cx="14" cy="14" r="3" /><circle cx="14" cy="25" r="3" />
              </svg>
            </IconButton>
          </Extensions>
        </Toolbar>

        <Stage>
          <MapDrawing />
          <StatusPill>
            <IconButton $color="#808080" aria-label="Headset view"><FaVrCardboard /></IconButton>
            <IconButton $color="#e93323" aria-label="Connection"><FaWifi /></IconButton>
          </StatusPill>
          <ToolStack>
            {tools.map((t) => (
              <ToolButton key={t.name} aria-label={t.name} $color={t.color} $shift={t.shift}>{t.icon}</ToolButton>
            ))}
          </ToolStack>
          <Clock>4:10</Clock>

          <Dialog role="dialog" aria-label="Airport">
            <DialogHead>
              <DialogTitle>KORD Chicago-O'Hare Intl IL</DialogTitle>
              <HeadTools>
                <IconGroup $gap={14}>
                  <IconButton $h={35} aria-label="Pin"><FaThumbtack /></IconButton>
                  <IconButton $h={35} $up aria-label="Aircraft"><FaPlane /></IconButton>
                  <IconButton $h={35} aria-label="Weather"><FaCloudBolt /></IconButton>
                  <IconButton $h={35} aria-label="Winds"><FaWind /></IconButton>
                  <IconButton $h={35} aria-label="Stations"><FaTowerCell /></IconButton>
                </IconGroup>
                <IconGroup $gap={21}>
                  <IconButton $h={35} aria-label="Departure"><FaPlaneDeparture /></IconButton>
                  <IconButton $h={35} aria-label="Arrival"><FaPlaneArrival /></IconButton>
                  <IconButton $h={35} aria-label="Alternate"><FaPlaneSlash /></IconButton>
                  <IconGroup $gap={14}>
                    <IconButton $h={35} aria-label="Refresh"><FaArrowsRotate /></IconButton>
                    <Updated>@ 4:09</Updated>
                  </IconGroup>
                </IconGroup>
              </HeadTools>
              <CloseButton aria-label="Close">X</CloseButton>
            </DialogHead>
            <DialogBody>
              <Lines>
                {"Airport: Chicago O'Hare International Airport\nCity: Chicago |Region: US-IL\nCountry: US |Type: large_airport\nICAO: KORD |IATA: ORD\nLatitude: 41.979594 |Longitude: -87.904186\nDistance: 720 | Bearing: 280 "}
                <FaArrowRight />
                {" | Elevation: 672 feet"}
              </Lines>
              <Rule />
              <StationBar>
                <StationButton>-</StationButton>
                <StationButton>All Stations</StationButton>
              </StationBar>
              <Rule />
              <Stations>
                <tbody>
                  {stations.map((s) => (
                    <tr key={s.id}>
                      <RoleCell $bg={s.bg}>{s.role}</RoleCell>
                      <td>{s.id}</td>
                      <td><Frequency href={`#${s.freq}`}>{s.freq}</Frequency></td>
                    </tr>
                  ))}
                </tbody>
              </Stations>
              <Rule />
              <Lines>
                {"CHICAGO O'HARE INTERNATIONAL AIRPORT INFORMATION,YANKEE.\n0251 ZULU. ARRIVING RUNWAYS 9C 10C.,DEPARTING RUNWAY 10L.\nWIND CALM. VISIBILITY 10.,SKY CONDITIONS: FEW AT 25000FT.\nTEMPERATURE 21.,DEWPOINT 12. ALTIMETER 2995. DENSITY\nALTITUDE 1500,FEET. ADVISE ON INITIAL CONTACT YOU\nHAVE,INFORMATION YANKEE.\nSOURCE: SayIntentions.AI,"}
              </Lines>
              <Rule />
            </DialogBody>
          </Dialog>

          <LogPanel>
            <LogTable>
              <tbody>
                {messages.map((m) => (
                  <LogRow key={m.from + m.time} $c={m.c}>
                    <td>{m.icon}</td>
                    <td>{m.from}</td>
                    <td>{m.time}</td>
                    <td>
                      {m.removable && (
                        <IconButton $color={m.c} aria-label="Delete message"><FaTrash /></IconButton>
                      )}
                    </td>
                    <td>{m.text}</td>
                  </LogRow>
                ))}
              </tbody>
            </LogTable>
          </LogPanel>
        </Stage>

        <RadioBar>
          <div>
            <RadioRow>
              <IconButton aria-label="Search"><FaMagnifyingGlass /></IconButton>
              <IconButton aria-label="Measure"><FaRuler /></IconButton>
              <Pair $small>1000<br />1000</Pair>
              <IconButton aria-label="Swap COM1"><Swap /></IconButton>
              <Pair $c="#6bf84b">124.85<br />124.85</Pair>
            </RadioRow>
            <Route>
              <IconButton $h={32} aria-label="Own aircraft"><FaPlane /></IconButton> GNGBI
              <IconButton $h={26} aria-label="Departure"><FaPlaneDeparture /></IconButton> KTEB
              <IconButton $h={26} aria-label="Arrival"><FaPlaneArrival /></IconButton> KORD
              <IconButton $h={26} aria-label="Alternate"><FaPlaneSlash /></IconButton> KMKE
            </Route>
          </div>
          <RadioRow>
            <IconButton aria-label="Swap COM2"><Swap /></IconButton>
            <Pair>124.85<br />124.85</Pair>
          </RadioRow>
          <Transponder>
            <div>XPDR: 1200/<Tint $c="#dc2c20">STBY</Tint></div>
            <div>v.2.25.24502</div>
            <div>Network: <Tint $c="#b2f25a">SI (843515716)</Tint></div>
          </Transponder>
          <Apps>
            <AppRow>
              <IconButton aria-label="Stations"><FaTowerCell /></IconButton>
              <IconButton aria-label="Gauges"><FaGauge /></IconButton>
              <IconButton aria-label="Filter"><FaFilter /></IconButton>
              <IconButton aria-label="Pins"><FaThumbtack /></IconButton>
              <IconButton aria-label="Radio"><FaWalkieTalkie /></IconButton>
              <IconButton aria-label="Sounds"><FaMusic /></IconButton>
              <IconButton aria-label="Reload data"><FaArrowsRotate /></IconButton>
            </AppRow>
            <AppRow>
              <IconButton aria-label="Separation"><FaPeopleArrows /></IconButton>
              <IconButton aria-label="Storms"><FaCloudBolt /></IconButton>
              <IconButton aria-label="Mail"><FaEnvelope /></IconButton>
              <IconButton $color="#dd3020" aria-label="Network"><FaGlobe /></IconButton>
              <Count>1</Count>
              <IconButton aria-label="Settings"><FaScrewdriverWrench /></IconButton>
              <IconButton aria-label="Delete"><FaTrash /></IconButton>
            </AppRow>
          </Apps>
          <Tooltip>Screen Sharing</Tooltip>
        </RadioBar>
      </Window>
    </Desktop>
  );
}
